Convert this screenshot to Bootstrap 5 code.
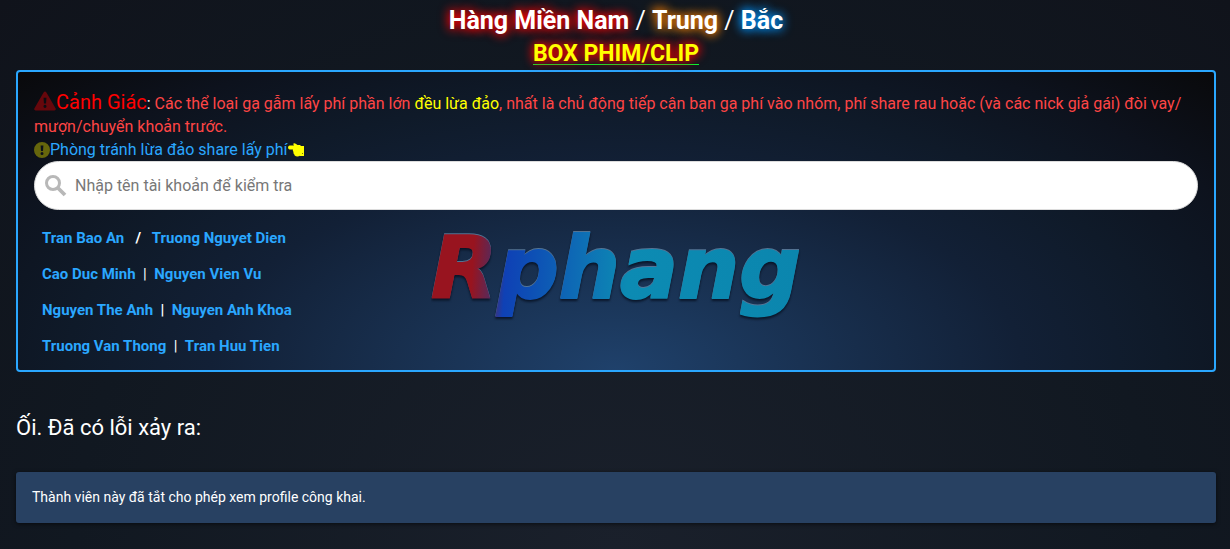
<!DOCTYPE html>
<html lang="vi">
<head>
<meta charset="utf-8">
<meta name="viewport" content="width=device-width, initial-scale=1">
<title>Rphang</title>
<link href="https://cdn.jsdelivr.net/npm/bootstrap@5.3.0/dist/css/bootstrap.min.css" rel="stylesheet">
<style>
body{min-height:100vh;font-family:Roboto,sans-serif;font-size:16px;line-height:23px;color:#fff;background:radial-gradient(ellipse at bottom,#1a202b 0%,#111821 62%,#10131b 100%) no-repeat #10131b}
a{color:#2aa7ff;text-decoration:none}
.regions{padding:5px 0 1px 2px;font-size:25px;line-height:32px}
.regions a{color:#fff;font-weight:700}
.glow-red{text-shadow:0 0 10px red,0 0 12px red}
.glow-orange{text-shadow:0 0 10px #ff8000,0 0 12px #ff8000}
.glow-blue{text-shadow:0 0 10px #0095ff,0 0 12px #0095ff}
.regions .clips{display:inline-block;font-size:23px;line-height:21px;color:#ff0;border-bottom:1px solid #0f3}
.page{padding:0 14px 0 16px}
.panel{padding:19px 16px 6px;border:2px solid #2aa7ff;border-radius:4px;background:radial-gradient(ellipse at bottom,#1f416b 0%,#122036 48%,#0f1a29 65%,#0d121d 82%,#09090b 100%)}
.warning{color:#ff4545}
.warning svg{vertical-align:-2px}
.warning-title{font-size:20px;line-height:20px;color:#f00}
.hot{color:#ff0}
.search-box{height:49px;padding-left:10px;border:1px solid #dcdcdc;border-radius:25px;background:#fff}
.search-box input{color:#333;outline:0}
.search-box input::placeholder{color:#777;opacity:1}
.names{padding:10px 0 0 8px;font-size:15px;line-height:36px;font-weight:700}
.wordmark{font:italic 700 86px "DejaVu Sans",sans-serif;filter:drop-shadow(0 -1px 0 rgba(125,165,200,.6)) drop-shadow(0 2px 1px rgba(5,14,30,.8))}
.error-title{margin:40px 0 28px;font-size:22px;line-height:32px;font-weight:400}
.notice{font-size:14px;line-height:19px;background:#284162;border-radius:3px;box-shadow:0 1px 4px rgba(0,0,0,.6)}
</style>
</head>
<body>
<header class="regions text-center">
  <div><a href="#" class="glow-red">Hàng Miền Nam</a> / <a href="#" class="glow-orange">Trung</a> / <a href="#" class="glow-blue">Bắc</a></div>
  <div><a href="#" class="clips glow-red">BOX PHIM/CLIP</a></div>
</header>
<main class="page">
  <section class="panel">
    <p class="warning mb-0"><svg width="22" height="20" viewBox="0 0 23 20" aria-hidden="true"><path fill="#66070c" fill-rule="evenodd" d="M10 1q1.500-2 3 0l9.500 16.500q1 2-1.200 2.500H1.700Q-.5 19.500.5 17.500zM10 6.500l.4 6.200h2.200l.4-6.200zM11.500 14a1.600 1.600 0 1 0 0 3.200 1.600 1.600 0 0 0 0-3.200z"/></svg><span class="warning-title">Cảnh Giác</span><span class="text-white">:</span> Các thể loại gạ gẫm lấy phí phần lớn <span class="hot">đều lừa đảo</span>, nhất là chủ động tiếp cận bạn gạ phí vào nhóm, phí share rau hoặc (và các nick giả gái) đòi vay/<wbr>mượn/chuyển khoản trước.</p>
    <a href="#" class="d-flex align-items-center"><svg width="16" height="16" viewBox="0 0 16 16" aria-hidden="true"><path fill="#66660c" fill-rule="evenodd" d="M8 0a8 8 0 1 0 0 16A8 8 0 0 0 8 0zM6.600 3.500h2.800L9 9H7zM8 10a1.500 1.500 0 1 1 0 3 1.500 1.500 0 0 1 0-3z"/></svg>Phòng tránh lừa đảo share lấy phí<svg width="17" height="14" viewBox="0 0 17 14" aria-hidden="true"><path fill="#ff0" d="M1.500 2.500H6Q4.700.5 6 .2q1.200-.3 3.500 1.800h3v10.500q-2 1.200-4.500.8-1.700-.3-1.800-2-1.300-1-.6-2.300Q4.500 8 5 6.500H1.500Q0 6 0 4.500t1.500-2zM12 3h4v10h-4z"/><path fill="#77770a" d="M14 10h1v1h-1z"/></svg></a>
    <form class="search-box d-flex align-items-center" role="search" onsubmit="return false">
      <svg class="me-2 flex-shrink-0" width="22" height="22" viewBox="0 0 22 22" fill="none" stroke="#b8b8b8" aria-hidden="true"><circle cx="8" cy="8" r="6.500" stroke-width="3"/><path stroke-width="3.800" d="m13 13 7 7"/></svg>
      <input class="border-0 bg-transparent w-100 h-100 p-0 me-3" type="text" aria-label="Nhập tên tài khoản để kiểm tra" placeholder="Nhập tên tài khoản để kiểm tra">
    </form>
    <div class="row gx-0">
      <div class="names col">
        <div><a href="#">Tran Bao An</a> &nbsp; / &nbsp; <a href="#">Truong Nguyet Dien</a></div>
        <div><a href="#">Cao Duc Minh</a>&nbsp; <span class="fw-normal">|</span> &nbsp;<a href="#">Nguyen Vien Vu</a></div>
        <div><a href="#">Nguyen The Anh</a>&nbsp; | &nbsp;<a href="#">Nguyen Anh Khoa</a></div>
        <div><a href="#">Truong Van Thong</a>&nbsp; <span class="fw-normal">|</span> &nbsp;<a href="#">Tran Huu Tien</a></div>
      </div>
      <div class="col-auto pt-2">
        <svg width="378" height="120" viewBox="0 0 378 120" role="img" aria-label="Rphang">
          <defs>
            <linearGradient id="ink" gradientUnits="userSpaceOnUse" x1="0" y1="0" x2="370" y2="24">
              <stop offset=".12" stop-color="#98141f"/><stop offset=".17" stop-color="#5b2857"/><stop offset=".21" stop-color="#0f41b5"/><stop offset=".28" stop-color="#0d4fb5"/><stop offset=".42" stop-color="#0e70b5"/><stop offset=".54" stop-color="#0c8bb3"/><stop offset="1" stop-color="#0b86ae"/>
            </linearGradient>
          </defs>
          <g class="wordmark">
            <text x="0" y="80" fill="url(#ink)" stroke="url(#ink)" stroke-width="2">Rphang</text>
          </g>
        </svg>
      </div>
      <div class="col"></div>
    </div>
  </section>
  <h1 class="error-title">Ối. Đã có lỗi xảy ra:</h1>
  <div class="notice p-3" role="alert">Thành viên này đã tắt cho phép xem profile công khai.</div>
</main>
<script src="https://cdn.jsdelivr.net/npm/bootstrap@5.3.0/dist/js/bootstrap.bundle.min.js"></script>
</body>
</html>
